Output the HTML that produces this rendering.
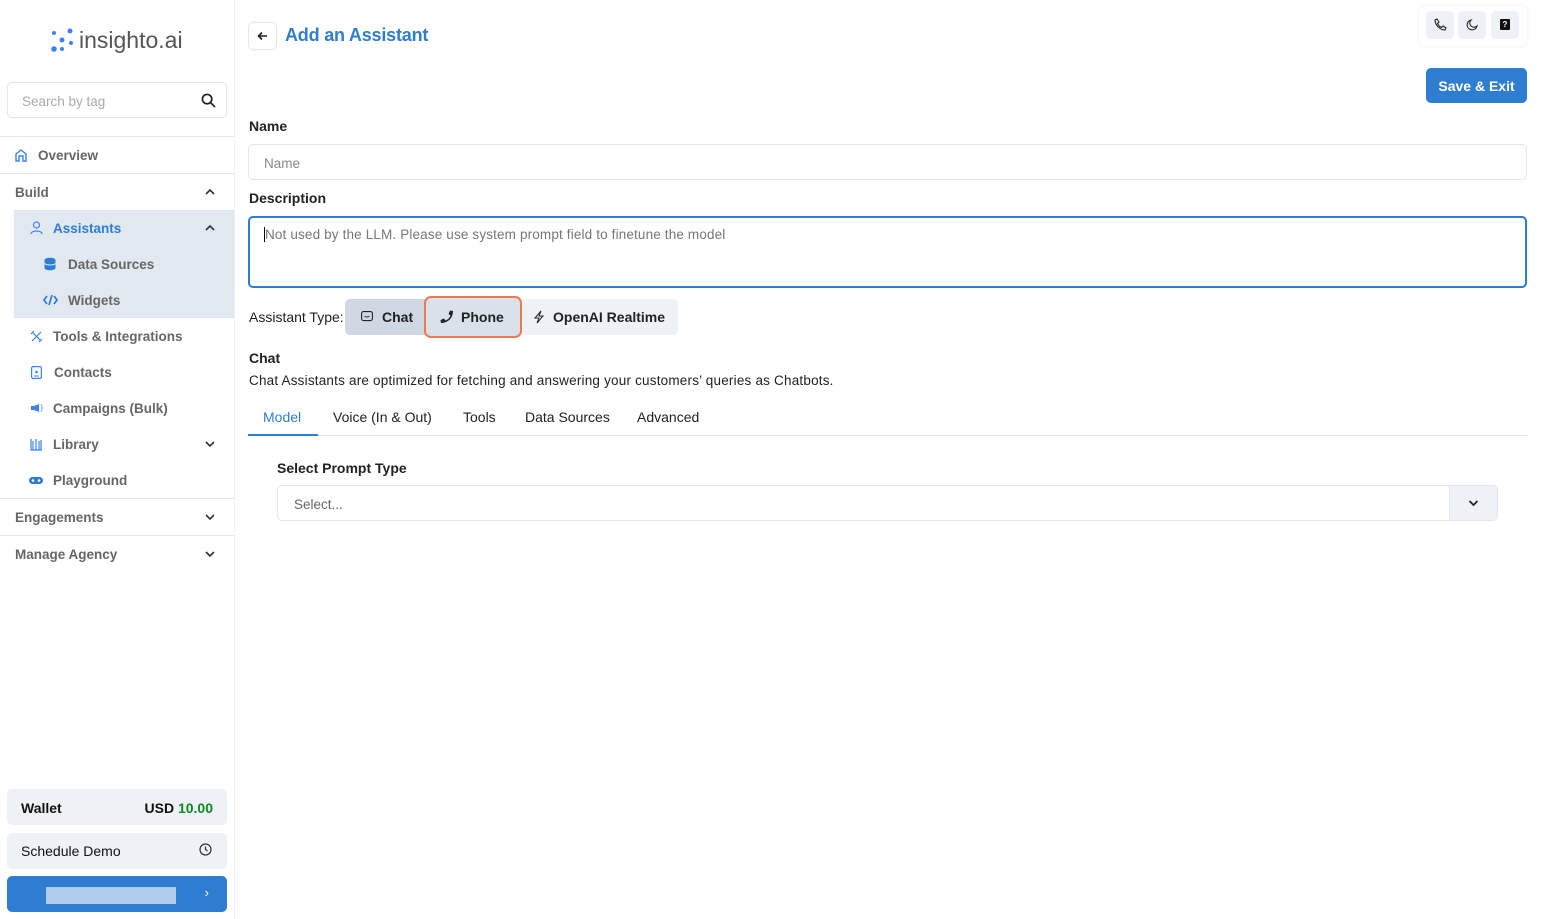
<!DOCTYPE html>
<html><head><meta charset="utf-8"><style>
*{box-sizing:border-box;margin:0;padding:0}
body{width:1541px;height:919px;overflow:hidden;font-family:"Liberation Sans",sans-serif;background:#fff;color:#222;position:relative}
.sb{position:absolute;left:0;top:0;width:235px;height:919px;border-right:1px solid #eef0f3;background:#fff}
.abs{position:absolute}
.nav{position:absolute;left:0;width:234px;height:36px;display:flex;align-items:center;font-size:13.5px;font-weight:bold;color:#666}
.nav svg{margin-right:10px}
.nav svg.chev{position:absolute;left:205px;top:13px;margin:0}
.hr{position:absolute;left:0;width:234px;height:1px;background:#e3e6ea}
.btn{position:absolute;border-radius:5px;background:#eef1f5}
</style></head><body>
<div class="sb">
  <div class="abs" style="left:50px;top:27px;display:flex;align-items:center">
    <svg width="24" height="26" viewBox="0 0 24 26"><g fill="#3b82f6"><circle cx="4" cy="5" r="2"/><circle cx="20" cy="3" r="2.5"/><circle cx="12" cy="12" r="2.5"/><circle cx="4" cy="21" r="2.8"/><circle cx="12" cy="21" r="2"/><circle cx="21" cy="15" r="2"/></g></svg>
    <span style="font-size:23px;color:#555;margin-left:5px">insighto.ai</span>
  </div>
  <div class="abs" style="left:7px;top:82px;width:220px;height:36px;border:1px solid #e3e6ea;border-radius:5px;font-size:13.5px;color:#aaa;padding:11px 14px">Search by tag
    <svg class="abs" style="right:10px;top:10px" width="15" height="15" viewBox="0 0 16 16"><circle cx="6.5" cy="6.5" r="5" fill="none" stroke="#222" stroke-width="1.8"/><line x1="10.5" y1="10.5" x2="15" y2="15" stroke="#222" stroke-width="1.8"/></svg></div>
  <div class="hr" style="top:136px"></div>
  <div class="nav" style="top:137px;padding-left:14px"><svg width="14" height="14" viewBox="0 0 14 14"><path d="M2 13V6l5-4 5 4v7H9V8H5v5z" fill="none" stroke="#3b82f6" stroke-width="1.4"/></svg>Overview</div>
  <div class="hr" style="top:173px"></div>
  <div class="nav" style="top:174px;padding-left:15px">Build<svg class="chev" width="10" height="10" viewBox="0 0 10 10"><path d="M1 7l4-4 4 4" fill="none" stroke="#333" stroke-width="1.6"/></svg></div>
  <div class="abs" style="left:14px;top:210px;width:220px;height:108px;background:#e2e8f0"></div>
  <div class="nav" style="top:210px;padding-left:30px;color:#2f7dd0"><svg width="13" height="14" viewBox="0 0 13 14"><circle cx="6.5" cy="4" r="3" fill="none" stroke="#3b82f6" stroke-width="1.2"/><path d="M1 13c0-4 11-4 11 0" fill="none" stroke="#3b82f6" stroke-width="1.2"/></svg>Assistants<svg class="chev" width="10" height="10" viewBox="0 0 10 10"><path d="M1 7l4-4 4 4" fill="none" stroke="#333" stroke-width="1.6"/></svg></div>
  <div class="nav" style="top:246px;padding-left:44px"><svg width="12" height="14" viewBox="0 0 12 14" style="margin-right:12px"><ellipse cx="6" cy="3" rx="5.5" ry="2.3" fill="#2f7dd0"/><rect x=".5" y="3" width="11" height="8" fill="#2f7dd0"/><ellipse cx="6" cy="11" rx="5.5" ry="2.3" fill="#2f7dd0"/><path d="M.5 6.5c2 2 9 2 11 0" stroke="#e2e8f0" fill="none"/></svg>Data Sources</div>
  <div class="nav" style="top:282px;padding-left:43px"><svg width="15" height="12" viewBox="0 0 15 12"><path d="M4 2L1 6l3 4M11 2l3 4-3 4M9 1L6 11" fill="none" stroke="#2f7dd0" stroke-width="1.7"/></svg>Widgets</div>
  <div class="nav" style="top:318px;padding-left:30px"><svg width="13" height="13" viewBox="0 0 13 13"><path d="M2 2l9 9M11 2L2 11M1 4l3-3M9 12l3-3" fill="none" stroke="#3b82f6" stroke-width="1.2"/></svg>Tools &amp; Integrations</div>
  <div class="nav" style="top:354px;padding-left:31px"><svg width="11" height="13" viewBox="0 0 11 13" style="margin-right:12px"><rect x=".6" y=".6" width="9.8" height="11.8" rx="1.5" fill="none" stroke="#3b82f6" stroke-width="1.2"/><circle cx="5.5" cy="6" r="1.3" fill="#3b82f6"/><path d="M3 10h5" stroke="#3b82f6"/></svg>Contacts</div>
  <div class="nav" style="top:390px;padding-left:30px"><svg width="13" height="10" viewBox="0 0 13 10"><path d="M1 3h3l5-2v8l-5-2H1z" fill="#3b82f6"/><path d="M11 3l1-1M11 5h2M11 7l1 1" stroke="#3b82f6"/></svg>Campaigns (Bulk)</div>
  <div class="nav" style="top:426px;padding-left:30px"><svg width="13" height="13" viewBox="0 0 13 13"><path d="M1 1v11h11M3 3v9M6 1v11M9 3v9M11 2v10" fill="none" stroke="#3b82f6" stroke-width="1.2"/></svg>Library<svg class="chev" width="10" height="10" viewBox="0 0 10 10"><path d="M1 3l4 4 4-4" fill="none" stroke="#333" stroke-width="1.6"/></svg></div>
  <div class="nav" style="top:462px;padding-left:29px"><svg width="14" height="9" viewBox="0 0 14 9"><rect x="0" y="1" width="14" height="7" rx="3.5" fill="#2f7dd0"/><circle cx="4" cy="4.5" r="1.3" fill="#fff"/><circle cx="10" cy="4.5" r="1.3" fill="#fff"/></svg>Playground</div>
  <div class="hr" style="top:498px"></div>
  <div class="nav" style="top:499px;padding-left:15px">Engagements<svg class="chev" width="10" height="10" viewBox="0 0 10 10"><path d="M1 3l4 4 4-4" fill="none" stroke="#333" stroke-width="1.6"/></svg></div>
  <div class="hr" style="top:535px"></div>
  <div class="nav" style="top:536px;padding-left:15px">Manage Agency<svg class="chev" width="10" height="10" viewBox="0 0 10 10"><path d="M1 3l4 4 4-4" fill="none" stroke="#333" stroke-width="1.6"/></svg></div>
  <div class="btn" style="left:7px;top:789px;width:220px;height:36px;font-size:14px;font-weight:bold;padding:11px 14px;color:#111">Wallet<span style="position:absolute;right:14px">USD <span style="color:#0a8a1f">10.00</span></span></div>
  <div class="btn" style="left:7px;top:833px;width:220px;height:36px;font-size:14px;padding:10px 14px;color:#111">Schedule Demo<svg class="abs" style="right:15px;top:10px" width="13" height="13" viewBox="0 0 13 13"><circle cx="6.5" cy="6.5" r="5.5" fill="none" stroke="#333" stroke-width="1.2"/><path d="M6.5 3.5v3l2 1.5" fill="none" stroke="#333" stroke-width="1.2"/></svg></div>
  <div class="btn" style="left:7px;top:876px;width:220px;height:36px;background:#2f7dd0"><div class="abs" style="left:39px;top:11px;width:130px;height:17px;background:#aecbec"></div><span class="abs" style="right:18px;top:9px;color:#fff;font-size:13px">›</span></div>
</div>

<div class="abs" style="left:248px;top:22px;width:29px;height:28px;border:1px solid #e3e6ea;border-radius:5px"><svg class="abs" style="left:8px;top:8px" width="11" height="10" viewBox="0 0 11 10"><path d="M10 5H2M5 1.5L1.5 5 5 8.5" fill="none" stroke="#222" stroke-width="1.6"/></svg></div>
<div class="abs" style="left:285px;top:25px;font-size:18px;font-weight:bold;color:#2f7dd0;letter-spacing:-0.2px">Add an Assistant</div>
<div class="abs" style="left:1419px;top:6px;width:108px;height:40px;border-radius:6px;box-shadow:0 0 3px rgba(0,0,0,.08)"></div>
<div class="btn" style="left:1426px;top:11px;width:28px;height:28px"><svg class="abs" style="left:8px;top:7px" width="13" height="13" viewBox="0 0 13 13"><path d="M3 1l2 3-1.5 1.5c1 2 2 3 4 4L9 8l3 2-1 2C6 12 1 7 1 2z" fill="none" stroke="#222" stroke-width="1.1"/></svg></div>
<div class="btn" style="left:1458px;top:11px;width:28px;height:28px"><svg class="abs" style="left:8px;top:8px" width="12" height="12" viewBox="0 0 12 12"><path d="M5 1a5 5 0 1 0 6 6A4 4 0 0 1 5 1z" fill="none" stroke="#222" stroke-width="1.1"/></svg></div>
<div class="btn" style="left:1491px;top:11px;width:28px;height:28px"><div class="abs" style="left:9px;top:8px;width:10px;height:11px;background:#111;border-radius:1px;color:#fff;font-size:8px;font-weight:bold;text-align:center;line-height:11px">?</div></div>
<div class="abs" style="left:1426px;top:68px;width:101px;height:35px;background:#2f7dd0;border-radius:5px;color:#fff;font-weight:bold;font-size:14px;text-align:center;line-height:37px">Save &amp; Exit</div>

<div class="abs" style="left:249px;top:118px;font-size:14px;font-weight:bold;color:#222">Name</div>
<div class="abs" style="left:248px;top:144px;width:1279px;height:36px;border:1px solid #e3e6ea;border-radius:5px;font-size:13.5px;color:#888;padding:11px 15px">Name</div>
<div class="abs" style="left:249px;top:190px;font-size:14px;font-weight:bold;color:#222">Description</div>
<div class="abs" style="left:248px;top:216px;width:1279px;height:72px;border:2px solid #2f7dd0;border-radius:5px;font-size:13.5px;color:#777;padding:9px 15px;letter-spacing:0.15px"><span style="border-left:1px solid #000;margin-left:-1px"></span>Not used by the LLM. Please use system prompt field to finetune the model</div>

<div class="abs" style="left:249px;top:309px;font-size:14px;color:#222">Assistant Type:</div>
<div class="abs" style="left:345px;top:299px;width:333px;height:36px;background:#eef1f5;border-radius:5px"></div>
<div class="abs" style="left:345px;top:299px;width:176px;height:36px;background:#cfd8e3;border-radius:5px"></div>
<div class="abs" style="left:345px;top:299px;height:36px;font-size:14px;font-weight:bold;color:#222;line-height:37px;padding-left:16px"><svg width="12" height="12" viewBox="0 0 12 12" style="margin-right:9px;vertical-align:-1px"><rect x=".6" y=".6" width="10.8" height="9" rx="2" fill="none" stroke="#222" stroke-width="1.1"/><path d="M3.5 5c1 1.3 4 1.3 5 0" fill="none" stroke="#222"/></svg>Chat</div>
<div class="abs" style="left:424px;top:296px;width:98px;height:42px;border:2.5px solid #ee7a4a;border-radius:7px;background:#dae1ea;font-size:14px;font-weight:bold;color:#222;line-height:39px;padding-left:14px"><svg width="14" height="14" viewBox="0 0 14 14" style="margin-right:7px;vertical-align:-2px"><path d="M13 1l-3-.5-1.5 3.5 2 1.5C9.5 8 8 9.5 5.5 10.5L4 8.5 .5 10l.5 3C8 13 13 8 13 1z" fill="#222"/></svg>Phone</div>
<div class="abs" style="left:533px;top:299px;height:36px;font-size:14px;font-weight:bold;color:#222;line-height:37px"><svg width="12" height="14" viewBox="0 0 12 14" style="margin-right:8px;vertical-align:-2px"><path d="M8 1L2 8h4l-2 5 6-7H6z" fill="none" stroke="#222" stroke-width="1"/></svg>OpenAI Realtime</div>

<div class="abs" style="left:249px;top:350px;font-size:14px;font-weight:bold;color:#222">Chat</div>
<div class="abs" style="left:249px;top:373px;font-size:13.5px;color:#222;letter-spacing:0.2px">Chat Assistants are optimized for fetching and answering your customers’ queries as Chatbots.</div>
<div class="abs" style="left:248px;top:435px;width:1279px;height:1px;background:#e3e6ea"></div>
<div class="abs" style="left:248px;top:434px;width:70px;height:2px;background:#2f7dd0"></div>
<div class="abs" style="left:263px;top:409px;font-size:14px;color:#2f7dd0">Model</div>
<div class="abs" style="left:333px;top:409px;font-size:14px;color:#222">Voice (In &amp; Out)</div>
<div class="abs" style="left:463px;top:409px;font-size:14px;color:#222">Tools</div>
<div class="abs" style="left:525px;top:409px;font-size:14px;color:#222">Data Sources</div>
<div class="abs" style="left:637px;top:409px;font-size:14px;color:#222">Advanced</div>

<div class="abs" style="left:277px;top:460px;font-size:14px;font-weight:bold;color:#222">Select Prompt Type</div>
<div class="abs" style="left:277px;top:485px;width:1221px;height:36px;border:1px solid #e3e6ea;border-radius:5px;font-size:13.5px;color:#666;padding:11px 16px">Select...</div>
<div class="abs" style="left:1449px;top:485px;width:49px;height:36px;background:#eef1f5;border:1px solid #e3e6ea;border-radius:0 5px 5px 0"><svg class="abs" style="left:18px;top:13px" width="11" height="8" viewBox="0 0 11 8"><path d="M1.5 2l4 4 4-4" fill="none" stroke="#222" stroke-width="1.8"/></svg></div>
</body></html>
